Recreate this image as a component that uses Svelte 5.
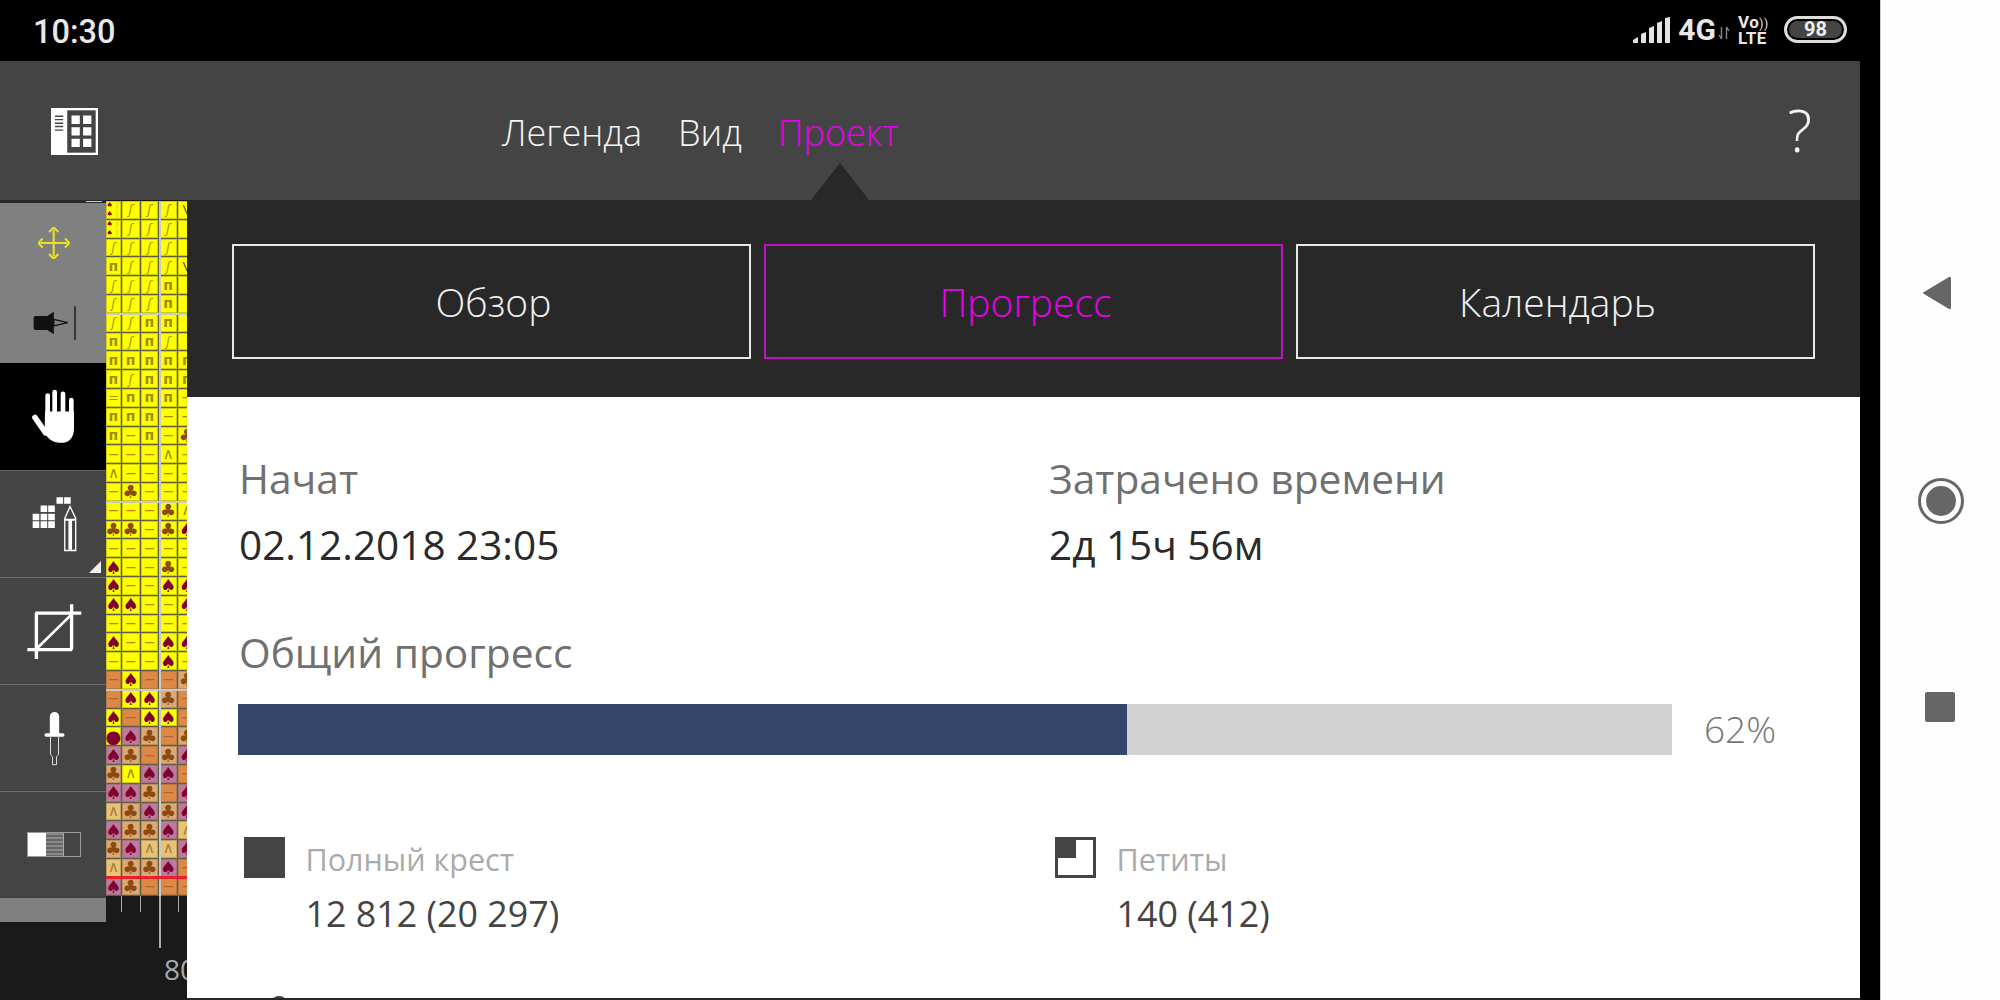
<script>
  const glyphs = { s: "ʃ", n: "п", d: "—", a: "∧", e: "=", c: "♣", p: "♠", o: "●", v: "V", m: "" };

  // Y yellow, O orange, T tan, P pink, L light
  const rows = [
    "Ym Ys Ys Ys Yv", "Ym Ys Ys Ys Y", "Ys Ys Ys Ys Y", "Yn Ys Ys Ys Yv", "Ys Ys Ys Yn Y", "Ys Ys Ys Yn Y",
    "Ys Ys Yn Yn Y", "Yn Ys Yn Ys Y", "Yn Yn Yn Yn Yn", "Yn Ys Yn Yn Yn", "Ye Yn Yn Yn Yd", "Yn Yn Yn Yd Yd",
    "Yn Yd Yn Yd Yc", "Yd Yd Yd Ya Yd", "Ya Yd Yd Yd Yd", "Yd Yc Yd Yd Yd",
    "Yd Yd Yd Yc Ya", "Yc Yc Yd Yc Yp", "Yd Yd Yd Yd Yd", "Yp Yd Yd Yc Yd", "Yp Yd Yd Yp Yp", "Yp Yp Yd Yd Yp",
    "Yd Yd Yd Yd Yd", "Yp Yd Yd Yp Yp", "Yd Yd Yd Yp Yd", "Od Yp Od Od Tc",
    "Od Yp Yp Tc Od", "Yp Od Yp Yp Od", "Yo Pp Tc Od Tc", "Pp Tc Od Tc Pp", "Tc Ya Pp Pp Od", "Pp Pp Tc Od Pp",
    "La Tc Pp Tc Pp", "Pp Tc Tc Pp La", "Tc Pp La La Pp", "La Tc Tc Pp Od", "Pp Tc Od Od Od"
  ];
  const cells = rows.map((r) => r.split(" ").map((c) => ({ bg: c[0], sym: c[1] ?? "" })));

  const tabs = ["Обзор", "Прогресс", "Календарь"];
  const progress = 62;
</script>

<div class="phone">
  <div class="screen">
    <div class="status">
      <span class="time">10:30</span>
      <div class="status-right">
        <svg class="signal" viewBox="0 0 37 26" width="37" height="26">
          <path d="M0 26v-3l5-3v6zM8 26v-9l5-2v11zM16 26V11l5-2v17zM24 26V6l5-2v22zM32 26V1l5-1v26z" fill="#e4e4e4" />
        </svg>
        <span class="net">4G</span>
        <svg class="arrows" viewBox="0 0 12 14" width="12" height="14">
          <path d="M3.5 1v12M1 9l2.5 4M8.5 13V1M8.5 1L11 5" stroke="#888" stroke-width="1.4" fill="none" />
        </svg>
        <span class="volte"><span>Vo<small>))</small></span><span>LTE</span></span>
        <span class="battery"><span>98</span></span>
      </div>
    </div>

    <header class="topbar">
      <svg class="logo" viewBox="153 320 142 142" width="47" height="47">
        <rect x="153" y="320" width="142" height="142" fill="#fff" />
        <rect x="202" y="327" width="86" height="128" fill="#444" />
        <path d="M215 343h25v25h-25zM250 343h25v25h-25zM215 378h25v25h-25zM250 378h25v25h-25zM215 413h25v25h-25zM250 413h25v25h-25z" fill="#fff" />
        <path d="M165 345h25M165 355h25M165 366h25M165 376h25M165 387h25" stroke="#444" stroke-width="4" />
      </svg>
      <nav class="menu">
        <span>Легенда</span>
        <span>Вид</span>
        <span class="active">Проект</span>
      </nav>
      <span class="help">?</span>
    </header>

    <div class="body">
      <aside class="tools">
        <div class="tools-edge"></div>
        <div class="tool-pair">
          <div class="half">
            <svg viewBox="115 682 96 96" width="32" height="32">
              <path d="M162 690v80M123 730h80M148 697l14-14 14 14M148 763l14 14 14-14M129 716l-13 14 13 14M196 716l13 14-13 14" stroke="#e8e420" stroke-width="6" fill="none" />
            </svg>
          </div>
          <div class="half">
            <svg viewBox="95 915 130 108" width="43" height="36">
              <path d="M102 948h36l20-13v68l-20-13h-36q-5 0-5-5v-32q0-5 5-5z" fill="#111" />
              <path d="M158 958l42 10-42 10z" fill="none" stroke="#111" stroke-width="4" />
              <path d="M222 918v102" stroke="#111" stroke-width="4" />
            </svg>
          </div>
        </div>

        <div class="tool hand">
          <svg viewBox="36 40 132 170" width="44" height="57">
            <g stroke="#fff" stroke-linecap="round" fill="none">
              <path d="M86 130V62M107 125V52M132 125V57M157 130V76" stroke-width="14" />
              <path d="M48 128l32 46" stroke-width="17" />
            </g>
            <path d="M78 110h87v50c0 30-16 44-38 44-22 0-36-8-50-28z" fill="#fff" />
          </svg>
        </div>

        <div class="tool">
          <svg viewBox="36 362 136 168" width="45" height="56">
            <path d="M110 365h20v20h-20zM133 365h20v20h-20zM62 390h20v20H62zM85 390h20v20H85zM38 415h20v20H38zM62 415h20v20H62zM85 415h20v20H85zM38 438h20v20H38zM62 438h20v20H62zM85 438h20v20H85z" fill="#fff" />
            <path d="M151 393l17 36v97h-33v-97z" fill="none" stroke="#fff" stroke-width="4" />
            <path d="M135 430h33v6h-33zM146 436h11v88h-11z" fill="#fff" />
          </svg>
          <span class="corner"></span>
        </div>

        <div class="tool">
          <svg viewBox="20 38 170 170" width="57" height="57">
            <path d="M48 68h137M51 68v137M24 177h134M156 42v135" stroke="#fff" stroke-width="10" fill="none" />
            <path d="M54 172L156 72" stroke="#fff" stroke-width="8" />
          </svg>
        </div>

        <div class="tool">
          <svg viewBox="70 362 68 168" width="23" height="56">
            <path d="M90 432v-50a14 14 0 0 1 28 0v50h11q5 0 5 5t-5 5H79q-5 0-5-5t5-5z" fill="#fff" />
            <path d="M92 442v54l6 6v24h12v-24l6-6v-54" fill="none" stroke="#ddd" stroke-width="3" />
          </svg>
        </div>

        <div class="tool last">
          <div class="swatch">
            <span class="sw-full"></span>
            <span class="sw-half"></span>
            <span class="sw-empty"></span>
          </div>
        </div>
        <div class="tools-foot"></div>
      </aside>

      <div class="canvas">
        <div class="chart">
          {#each cells as row}
            {#each row as cell}
              <span class="cell bg-{cell.bg} sym-{cell.sym}">
                {#if cell.sym === "m"}
                  <span class="mini">♠</span><span class="mini pale">ʃ</span><span class="mini">♠</span><span class="mini pale">ʃ</span>
                {:else}
                  {glyphs[cell.sym] ?? ""}
                {/if}
              </span>
            {/each}
          {/each}
          <span class="line v"></span>
          <span class="line h h1"></span>
          <span class="line h h2"></span>
          <span class="line h h3"></span>
          <span class="line red"></span>
        </div>
        <div class="ruler">
          <span class="tick t1"></span>
          <span class="tick t2"></span>
          <span class="tick long"></span>
          <span class="tick t3"></span>
          <span class="ruler-num">80</span>
        </div>
      </div>

      <main class="panel">
        <span class="caret"></span>
        <div class="tabs">
          {#each tabs as tab, i}
            <button class="tab" class:on={i === 1}>{tab}</button>
          {/each}
        </div>
        <section class="content">
          <div class="two">
            <div>
              <div class="label">Начат</div>
              <div class="value">02.12.2018 23:05</div>
            </div>
            <div>
              <div class="label">Затрачено времени</div>
              <div class="value">2д 15ч 56м</div>
            </div>
          </div>

          <div class="label total">Общий прогресс</div>
          <div class="progress">
            <div class="track"><div class="fill" style="width: {(889 / 1434) * 100}%"></div></div>
            <span class="pct">{progress}%</span>
          </div>

          <div class="stats">
            <div class="stat">
              <span class="ico solid"></span>
              <div>
                <div class="stat-name">Полный крест</div>
                <div class="stat-num">12 812 (20 297)</div>
              </div>
            </div>
            <div class="stat">
              <span class="ico petit"><i></i></span>
              <div>
                <div class="stat-name">Петиты</div>
                <div class="stat-num">140 (412)</div>
              </div>
            </div>
            <span class="peek"></span>
          </div>
        </section>
      </main>
    </div>
  </div>

  <div class="softkeys">
    <svg viewBox="0 0 30 36" width="30" height="36">
      <path d="M27 2q2-1 2 2v28q0 3-2 2L2 19q-2-1 0-2z" fill="#666" />
    </svg>
    <svg viewBox="0 0 46 46" width="46" height="46">
      <circle cx="23" cy="23" r="21.5" fill="none" stroke="#666" stroke-width="3" />
      <circle cx="23" cy="23" r="15" fill="#666" />
    </svg>
    <span class="sq"></span>
  </div>
</div>

<style>
  :global(body) {
    margin: 0;
    background: #000;
  }

  .phone {
    display: flex;
    width: 2000px;
    height: 1000px;
    overflow: hidden;
    font-family: "Open Sans", sans-serif;
  }

  .screen {
    width: 1860px;
    padding-right: 20px;
    background: #000;
    display: flex;
    flex-direction: column;
  }

  .status {
    height: 61px;
    display: flex;
    align-items: center;
    justify-content: space-between;
    color: #e8e8e8;
    font-family: Roboto, sans-serif;
  }

  .time {
    margin-left: 33px;
    font-size: 32.5px;
    font-weight: 500;
    margin-top: 2px;
  }

  .status-right {
    display: flex;
    align-items: center;
    margin-right: 13px;
    margin-top: -2px;
  }

  .net {
    margin-left: 8px;
    font-size: 30px;
    font-weight: 700;
  }

  .arrows {
    margin: 7px 0 0 2px;
  }

  .volte {
    display: flex;
    flex-direction: column;
    margin-left: 8px;
    font-size: 17px;
    font-weight: 700;
    line-height: 14px;
    letter-spacing: 0.5px;
    width: 33px;
  }

  .volte small {
    font-size: 12px;
    font-weight: 400;
  }

  .battery {
    margin-left: 13px;
    width: 63px;
    height: 27px;
    box-sizing: border-box;
    border: 3px solid #ddd;
    border-radius: 14px;
    padding: 2px;
    display: flex;
  }

  .battery span {
    flex: 1;
    background: #444;
    border-radius: 9px;
    color: #eee;
    font-size: 20px;
    font-weight: 700;
    line-height: 17px;
    text-align: center;
  }

  .topbar {
    height: 139px;
    background: #444;
    display: flex;
    align-items: center;
    padding-left: 51px;
    padding-right: 48px;
  }

  .logo {
    margin-top: 1px;
  }

  .menu {
    margin-left: 404px;
    display: flex;
    gap: 36px;
    font-size: 36px;
    font-weight: 300;
    color: #f4f4f4;
    margin-top: 4px;
  }

  .menu .active {
    color: #e800e8;
  }

  .help {
    margin-left: auto;
    font-size: 58px;
    font-weight: 300;
    color: #f4f4f4;
    margin-top: -2px;
  }

  .body {
    flex: 1;
    display: flex;
    background: #1a1a1a;
    min-height: 0;
  }

  .tools {
    width: 106px;
    flex: none;
    display: flex;
    flex-direction: column;
    position: relative;
    z-index: 1;
  }

  .tools-edge {
    height: 3px;
    background: linear-gradient(#ccc, #ccc) 86px 1px / 16px 1px no-repeat, #282828;
  }

  .tool-pair {
    height: 160px;
    background: #808080;
  }

  .half {
    height: 80px;
    padding-left: 2px;
    display: flex;
    align-items: center;
    justify-content: center;
  }

  .tool {
    height: 107px;
    padding-left: 2px;
    background: #444;
    border-bottom: 1px solid #6e6e6e;
    box-sizing: border-box;
    display: flex;
    align-items: center;
    justify-content: center;
    position: relative;
  }

  .tool.hand {
    height: 108px;
    padding-left: 0;
    background: #000;
    border-bottom-color: #666;
  }

  .tool.last {
    height: 106px;
    border-bottom: none;
  }

  .corner {
    position: absolute;
    right: 5px;
    bottom: 4px;
    border-style: solid;
    border-width: 0 0 12px 12px;
    border-color: transparent transparent #eee transparent;
  }

  .swatch {
    width: 54px;
    height: 25px;
    display: flex;
    box-sizing: border-box;
    border: 1px solid #999;
    margin-top: -1px;
  }

  .sw-full {
    width: 18px;
    background: #fff;
  }

  .sw-half {
    width: 17px;
    background: repeating-linear-gradient(#8a8a8a 0 2px, #666 2px 4px);
    border-right: 1px solid #aaa;
  }

  .sw-empty {
    flex: 1;
  }

  .tools-foot {
    height: 24px;
    background: #808080;
  }

  .canvas {
    width: 81px;
    flex: none;
    overflow: hidden;
    display: flex;
    flex-direction: column;
  }

  .chart {
    position: relative;
    margin-top: 1px;
    width: 93px;
    display: grid;
    grid-template-columns: 15.75px repeat(4, 18.75px);
    grid-auto-rows: 18.8px;
    background: #60604a;
    font-family: "DejaVu Sans", sans-serif;
  }

  .cell {
    margin: 0 1px 1px 0;
    display: flex;
    align-items: center;
    justify-content: center;
    font-size: 13px;
    line-height: 17px;
    overflow: hidden;
    color: #a89800;
    box-shadow: inset 0 0 0 1px rgba(90, 90, 60, 0.3);
  }

  .bg-Y { background: #ffff00; }
  .bg-O { background: #dd8844; }
  .bg-T { background: #dea873; }
  .bg-P { background: #bd7a9c; }
  .bg-L { background: #e9c274; }

  .sym-s { font-style: italic; }
  .sym-n { font-weight: 700; font-size: 14px; color: #a08c10; }
  .sym-c { color: #8a4a10; font-size: 18px; }
  .sym-p { color: #80002e; font-size: 18px; }
  .sym-o { color: #80002e; font-size: 18px; }
  .sym-d { color: #b08a10; font-size: 10px; font-weight: 700; }
  .bg-O.sym-d { color: #a8683a; }
  .bg-T.sym-d { color: #8a4a10; }
  .sym-a { color: #9a8a10; font-size: 15px; }
  .bg-L.sym-a, .bg-T.sym-a { color: #a07a40; }
  .sym-v { color: #5a5a70; }

  .sym-m {
    display: grid;
    grid-template-columns: 1fr 1fr;
    line-height: 8px;
  }

  .mini {
    font-size: 7px;
    color: #90002a;
    text-align: center;
  }

  .mini.pale {
    color: #c8c020;
  }

  .line {
    position: absolute;
    background: #c8c8c8;
  }

  .line.v {
    left: 53px;
    top: 0;
    bottom: 0;
    width: 2px;
  }

  .line.h {
    left: 0;
    right: 0;
    height: 2px;
  }

  .h1 { top: 112px; }
  .h2 { top: 300px; }
  .h3 { top: 488px; }

  .line.red {
    left: 0;
    right: 0;
    top: 675px;
    height: 3px;
    background: #e8202c;
  }

  .ruler {
    position: relative;
    flex: 1;
  }

  .tick {
    position: absolute;
    top: 0;
    width: 1px;
    height: 16px;
    background: #aaa;
  }

  .t1 { left: 15px; }
  .t2 { left: 34px; }
  .t3 { left: 72px; }

  .tick.long {
    left: 53px;
    width: 2px;
    height: 52px;
  }

  .ruler-num {
    position: absolute;
    left: 58px;
    top: 54px;
    font-size: 28px;
    color: #aaa;
    font-family: "Open Sans", sans-serif;
  }

  .panel {
    flex: 1;
    min-width: 0;
    background: #282828;
    display: flex;
    flex-direction: column;
    position: relative;
    padding-bottom: 2px;
  }

  .caret {
    position: absolute;
    left: 624px;
    top: -37px;
    border-style: solid;
    border-width: 0 29px 37px 29px;
    border-color: transparent transparent #282828 transparent;
  }

  .tabs {
    display: grid;
    grid-template-columns: repeat(3, 1fr);
    gap: 13px;
    padding: 44px 45px 38px 45px;
  }

  .tab {
    height: 115px;
    background: transparent;
    border: 2px solid #e8e8e8;
    color: #f0f0f0;
    font-family: inherit;
    font-size: 39px;
    font-weight: 300;
    padding: 0 0 0 4px;
  }

  .tab.on {
    border-color: #c010c0;
    color: #e800e8;
  }

  .content {
    flex: 1;
    background: #fff;
    padding: 55px 0 0 52px;
    overflow: hidden;
  }

  .two {
    display: grid;
    grid-template-columns: 810px 1fr;
  }

  .label {
    font-size: 40.7px;
    line-height: 52px;
    color: #707070;
  }

  .value {
    font-size: 40.5px;
    line-height: 52px;
    margin-top: 15px;
    color: #2a2a2a;
  }

  .total {
    margin-top: 55px;
  }

  .progress {
    display: flex;
    align-items: center;
    margin: 26px 0 0 -1px;
  }

  .track {
    width: 1434px;
    height: 51px;
    background: #d2d2d2;
  }

  .fill {
    height: 100%;
    background: #34466a;
  }

  .pct {
    margin-left: 32px;
    margin-top: -2px;
    font-size: 37px;
    font-weight: 300;
    color: #777;
  }

  .stats {
    display: grid;
    grid-template-columns: 811px 1fr;
    margin: 82px 0 0 5px;
    position: relative;
  }

  .stat {
    display: flex;
    gap: 20.5px;
  }

  .ico {
    width: 41px;
    height: 41px;
    box-sizing: border-box;
    flex: none;
    background: #444;
  }

  .ico.petit {
    background: #fff;
    border: 3px solid #444;
  }

  .ico.petit i {
    display: block;
    width: 18px;
    height: 18px;
    background: #444;
  }

  .stat-name {
    font-size: 30.5px;
    line-height: 40px;
    margin-top: 2px;
    color: #aaa;
  }

  .stat-num {
    font-size: 35.8px;
    line-height: 46px;
    margin-top: 11px;
    color: #444;
  }

  .peek {
    position: absolute;
    left: 28px;
    top: 159px;
    width: 14px;
    height: 8px;
    border-radius: 6px 6px 0 0;
    background: #444;
  }

  .softkeys {
    flex: 1;
    background: #fefefe;
    border-left: 1px solid #ccc;
    display: flex;
    flex-direction: column;
    align-items: center;
    padding: 275px 0 0 0;
    box-sizing: border-box;
  }

  .softkeys svg:nth-child(2) {
    margin-top: 167px;
  }

  .softkeys svg:first-child {
    margin-left: -7px;
  }

  .sq {
    width: 30px;
    height: 30px;
    margin: 168px 2px 0 0;
    border-radius: 2px;
    background: #666;
  }
</style>
